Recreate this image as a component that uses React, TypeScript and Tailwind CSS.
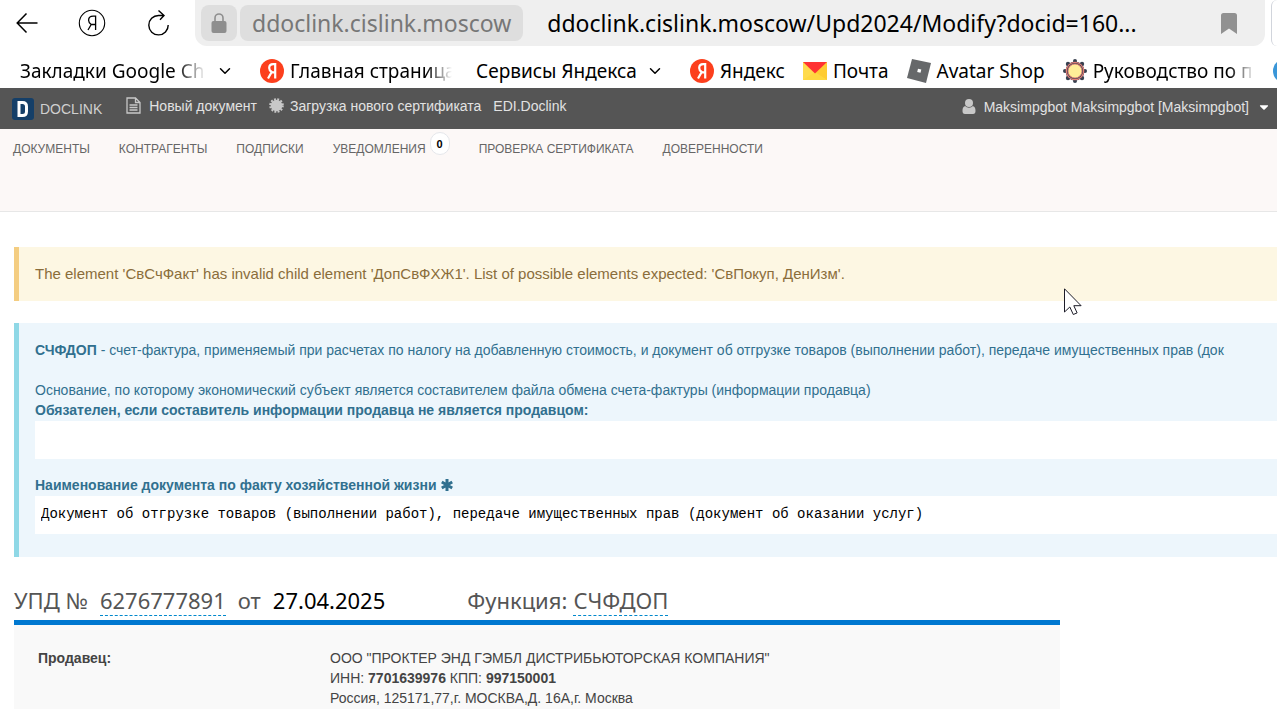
import type { ReactNode } from 'react';
import { ChevronDown } from 'lucide-react';
import { FaCaretDown } from 'react-icons/fa';

type NavItem = {
  title: string;
  badge?: number;
};

const navItems: NavItem[] = [
  { title: 'ДОКУМЕНТЫ' },
  { title: 'КОНТРАГЕНТЫ' },
  { title: 'ПОДПИСКИ' },
  { title: 'УВЕДОМЛЕНИЯ', badge: 0 },
  { title: 'ПРОВЕРКА СЕРТИФИКАТА' },
  { title: 'ДОВЕРЕННОСТИ' },
];

const BackIcon = () => (
  <svg width="22" height="22" viewBox="0 0 22 22" fill="none" stroke="#000" strokeWidth="1.5">
    <path d="M21.5 11H1.5M10.5 1.5L1.2 11l9.3 9.5" />
  </svg>
);

const YandexIcon = () => (
  <svg width="28" height="28" viewBox="0 0 28 28" fill="none" stroke="#000" strokeWidth="1.1">
    <circle cx="14" cy="14" r="12.7" />
    <path d="M17.600 21V7.200h-2.400c-2.800 0-4.600 1.600-4.600 4 0 2 1 3.100 2.600 4.300L10 21M13.200 15.500h4.400" strokeWidth="1.300" />
  </svg>
);

const ReloadIcon = () => (
  <svg width="24" height="28" viewBox="0 0 24 28" fill="none" stroke="#000" strokeWidth="1.4">
    <path d="M22.200 16A9.700 9.700 0 1 1 12.500 6.500h5.500M12.500 1.500l5.500 5-4 4.200" />
  </svg>
);

const LockIcon = () => (
  <svg width="16" height="20" viewBox="0 0 16 20">
    <path d="M4 9V5a4 4 0 0 1 8 0v4" fill="none" stroke="#8e8e8e" strokeWidth="1.6" />
    <rect x="0.5" y="8" width="15" height="12" rx="2" fill="#8e8e8e" />
  </svg>
);

const BookmarkIcon = () => (
  <svg width="16" height="21" viewBox="0 0 16 21">
    <path d="M2.5 0h11A2.5 2.5 0 0 1 16 2.5V21l-8-5.5L0 21V2.5A2.5 2.5 0 0 1 2.5 0z" fill="#919191" />
  </svg>
);

const YandexRedIcon = () => (
  <svg width="24" height="24" viewBox="0 0 24 24" className="shrink-0">
    <circle cx="12" cy="12" r="12" fill="#fc3f1d" />
    <path d="M15.200 19.500V5.200h-2c-2.600 0-4 1.500-4 3.700 0 2 .9 3 2.500 4.100L8 19.500M11.500 13.300h3.500" fill="none" stroke="#fff" strokeWidth="2.2" />
  </svg>
);

const MailIcon = () => (
  <svg width="24" height="18" viewBox="0 0 24 18" className="shrink-0">
    <path d="M0 0h24v18H0z" fill="#ffdb4d" />
    <path d="M24 0v18L12 11z" fill="#ffcc33" />
    <path d="M0 18l12-8 12 8z" fill="#ffd83f" />
    <path d="M0 0h24L12 11.500z" fill="#ff3333" />
  </svg>
);

const RobloxIcon = () => (
  <svg width="24" height="24" viewBox="0 0 24 24" className="shrink-0">
    <path d="M5 0l19 4-5 20L0 19z" fill="#66686a" />
    <path d="M11 9.700l3.300.8-.8 3.300-3.300-.8z" fill="#fff" />
  </svg>
);

const SunIcon = () => (
  <svg width="24" height="24" viewBox="0 0 24 24" className="shrink-0">
    <circle cx="12" cy="12" r="9.500" fill="#38404f" />
    <g fill="#38404f">
      <circle cx="12" cy="2" r="2" />
      <circle cx="12" cy="22" r="2" />
      <circle cx="2" cy="12" r="2" />
      <circle cx="22" cy="12" r="2" />
      <circle cx="5" cy="5" r="2.200" />
      <circle cx="19" cy="5" r="2.200" />
      <circle cx="5" cy="19" r="2.200" />
      <circle cx="19" cy="19" r="2.200" />
    </g>
    <circle cx="12" cy="12" r="8.700" fill="#38404f" stroke="#e57f78" strokeWidth="1.200" />
    <circle cx="12" cy="12" r="7" fill="#ffee98" stroke="#e57f78" strokeWidth="0.900" />
  </svg>
);

const DoclinkLogo = () => (
  <svg width="22" height="22" viewBox="0 0 22 22">
    <rect width="22" height="22" rx="3" fill="#153f68" />
    <path d="M7 4.500h3.500c3 0 4 1.500 4 4v5c0 2.500-1 4-4 4H7z" fill="none" stroke="#fff" strokeWidth="3" />
  </svg>
);

const FileIcon = () => (
  <svg width="15" height="17" viewBox="0 0 15 17" fill="none" stroke="#c8c8c8" strokeWidth="1.3">
    <path d="M1 1h8.500L14 5.500V16H1zM9.500 1v4.500H14M3.500 8h8M3.500 10.500h8M3.500 13h8" />
  </svg>
);

// round seal with short teeth
const SealIcon = () => (
  <svg width="15" height="15" viewBox="0 0 15 15">
    <circle cx="7.500" cy="7.500" r="5.800" fill="#c8c8c8" />
    <circle cx="7.500" cy="7.500" r="6.300" fill="none" stroke="#c8c8c8" strokeWidth="2" strokeDasharray="1.900 1.400" />
  </svg>
);

const UserIcon = () => (
  <svg width="14" height="15" viewBox="0 0 14 15" fill="#c8c8c8">
    <circle cx="7" cy="4" r="4" />
    <path d="M3.200 7C1 7.500.5 9.500.5 12c0 2 .8 3 2.500 3h8c1.700 0 2.500-1 2.500-3 0-2.500-.5-4.500-2.700-5-1 1-2.200 1.700-3.800 1.700S4.200 8 3.200 7z" />
  </svg>
);

const AsteriskIcon = () => (
  <svg width="12" height="12" viewBox="0 0 12 12" stroke="currentColor" strokeWidth="3">
    <path d="M6 0v12M.8 3l10.400 6M.8 9l10.400-6" />
  </svg>
);

const Cursor = () => (
  <svg width="20" height="28" viewBox="0 0 20 28" className="pointer-events-none absolute top-[288px] left-[1064px]">
    <path d="M.5.8v23.200l5.300-5 3.500 7.500 3.800-1.600-3.300-7.200h7.300z" fill="#fff" stroke="#1c1c28" />
  </svg>
);

const Bookmark = ({ icon, children }: { icon?: ReactNode; children: ReactNode }) => (
  <a href="#" className="flex shrink-0 items-center gap-1.5 whitespace-nowrap">
    {icon}
    {children}
  </a>
);

const Browser = () => (
  <header className="h-[88px] overflow-hidden bg-white font-['Noto_Sans',sans-serif] text-black">
    <div className="flex h-[46px] items-center">
      <div className="flex w-[195px] shrink-0 items-center gap-10 pl-4">
        <button aria-label="Назад"><BackIcon /></button>
        <button aria-label="Яндекс"><YandexIcon /></button>
        <button aria-label="Обновить"><ReloadIcon /></button>
      </div>
      <div className="flex h-full min-w-0 flex-1 items-center rounded-b-xl bg-[#efefef] pl-1.5 text-[23px]">
        <button aria-label="Защищённое соединение" className="flex h-9 w-9 shrink-0 items-center justify-center rounded-lg bg-[#dedede]">
          <LockIcon />
        </button>
        <button className="ml-[3px] h-9 shrink-0 rounded-lg bg-[#dedede] px-3 leading-9 text-[#777]">ddoclink.cislink.moscow</button>
        <input
          aria-label="Адрес"
          defaultValue="ddoclink.cislink.moscow/Upd2024/Modify?docid=160..."
          className="ml-6 h-9 min-w-0 flex-1 bg-transparent outline-none"
        />
        <button aria-label="Закладка" className="mr-7 ml-6"><BookmarkIcon /></button>
      </div>
      <div className="ml-1.5 h-full w-1.5 shrink-0 rounded-l-xl border-l border-gray-300" />
    </div>
    <nav className="flex h-[50px] items-center overflow-hidden pl-5 text-[19px]">
      <Bookmark>
        <span className="w-[186px] [mask-image:linear-gradient(to_right,#000_84%,transparent)]">Закладки Google Ch</span>
        <ChevronDown size={18} strokeWidth={2} className="ml-1" />
      </Bookmark>
      <div className="ml-[26px]">
        <Bookmark icon={<YandexRedIcon />}>
          <span className="w-[162px] [mask-image:linear-gradient(to_right,#000_84%,transparent)]">Главная страница</span>
        </Bookmark>
      </div>
      <div className="ml-6">
        <Bookmark>
          <span className="w-[160px]">Сервисы Яндекса</span>
          <ChevronDown size={18} strokeWidth={2} className="ml-1" />
        </Bookmark>
      </div>
      <div className="ml-[26px] flex items-center gap-[18px]">
        <Bookmark icon={<YandexRedIcon />}>Яндекс</Bookmark>
        <Bookmark icon={<MailIcon />}>Почта</Bookmark>
        <Bookmark icon={<RobloxIcon />}>Avatar Shop</Bookmark>
        <Bookmark icon={<SunIcon />}>
          <span className="w-[162px] [mask-image:linear-gradient(to_right,#000_84%,transparent)]">Руководство по п</span>
        </Bookmark>
        <span className="h-6 w-6 shrink-0 rounded-full bg-[#3a96d8]" />
      </div>
    </nav>
  </header>
);

const TopBar = () => (
  <div className="flex h-[41px] items-center bg-[#555] pr-1.5 pl-3 text-sm whitespace-nowrap text-[#e2e2e2]">
    <a href="#" className="flex items-center gap-1.5 text-[#d0d0d0]">
      <DoclinkLogo />
      DOCLINK
    </a>
    <div className="ml-6 flex items-center gap-3 pb-1.5">
      <a href="#" className="flex items-center gap-2">
        <FileIcon />
        Новый документ
      </a>
      <a href="#" className="flex items-center gap-1.5">
        <SealIcon />
        Загрузка нового сертификата
      </a>
      <a href="#">EDI.Doclink</a>
    </div>
    <button className="ml-auto flex items-center gap-2 pb-1">
      <UserIcon />
      Maksimpgbot Maksimpgbot [Maksimpgbot]
      <FaCaretDown size={14} className="text-white" />
    </button>
  </div>
);

const MainNav = () => (
  <nav className="flex h-[83px] gap-[29px] border-b border-[#e7e7e7] bg-[#fcf8f7] px-[13px] pt-2.5 text-xs leading-5 whitespace-nowrap text-[#666]">
    {navItems.map((item) => (
      <a key={item.title} href="#" className="flex h-5">
        {item.title}
        {item.badge !== undefined && (
          <span className="-mt-[7px] ml-1 h-[23px] w-5 rounded-full border border-gray-200 bg-white text-center text-[11px] leading-[22px] font-bold text-black">
            {item.badge}
          </span>
        )}
      </a>
    ))}
  </nav>
);

const DocumentInfo = () => (
  <section className="mt-[22px] border-l-[5px] border-[#8fd8e6] bg-[#edf6fc] pt-[17px] pb-[23px] pl-4 text-sm leading-5 text-[#31708f]">
    <p className="whitespace-nowrap">
      <b>СЧФДОП</b> - счет-фактура, применяемый при расчетах по налогу на добавленную стоимость, и документ об отгрузке товаров (выполнении работ), передаче имущественных прав (док
    </p>
    <label htmlFor="basis" className="mt-5 block">
      Основание, по которому экономический субъект является составителем файла обмена счета-фактуры (информации продавца)
      <b className="block">Обязателен, если составитель информации продавца не является продавцом:</b>
    </label>
    <input id="basis" className="mt-px block h-[38px] w-full bg-white px-1.5 outline-none" />
    <label htmlFor="doc-name" className="mt-4 flex items-center gap-1 font-bold">
      Наименование документа по факту хозяйственной жизни
      <AsteriskIcon />
    </label>
    <input
      id="doc-name"
      defaultValue="Документ об отгрузке товаров (выполнении работ), передаче имущественных прав (документ об оказании услуг)"
      className="mt-px block h-[38px] w-full bg-white px-1.5 pb-0.5 font-['Liberation_Mono',monospace] text-black outline-none"
    />
  </section>
);

const App = () => {
  return (
    <div className="relative flex min-h-screen flex-col overflow-hidden bg-white font-['Liberation_Sans',sans-serif]">
      <Browser />
      <TopBar />
      <MainNav />
      <main className="flex flex-1 flex-col pt-[35px] pl-3.5">
        <div role="alert" className="border-l-[5px] border-[#f4cd81] bg-[#fdf7e3] py-[17px] pl-4 text-[15px] leading-5 text-[#8a6d3b]">
          The element 'СвСчФакт' has invalid child element 'ДопСвФХЖ1'. List of possible elements expected: 'СвПокуп, ДенИзм'.
        </div>
        <DocumentInfo />
        <h1 className="mt-7 flex gap-3 pb-1 font-['Noto_Sans',sans-serif] text-[22px] leading-[30px] whitespace-nowrap text-[#555]">
          <span>УПД №</span>
          <a href="#" className="border-b border-dashed border-[#0088cc]">6276777891</a>
          <span>от</span>
          <span className="text-black">27.04.2025</span>
          <span className="ml-[70px]">Функция:</span>
          <a href="#" className="-ml-1.5 border-b border-dashed border-[#0088cc]">СЧФДОП</a>
        </h1>
        <dl className="grid w-full max-w-[1046px] flex-1 grid-cols-[292px_1fr] border-t-[5px] border-[#0078d0] bg-[#f9f9f9] px-6 pt-[23px] text-sm leading-5 text-[#444]">
          <dt className="font-bold">Продавец:</dt>
          <dd>
            ООО "ПРОКТЕР ЭНД ГЭМБЛ ДИСТРИБЬЮТОРСКАЯ КОМПАНИЯ"<br />
            ИНН: <b>7701639976</b> КПП: <b>997150001</b><br />
            Россия, 125171,77,г. МОСКВА,Д. 16А,г. Москва
          </dd>
        </dl>
      </main>
      <Cursor />
    </div>
  );
};

export default App;
